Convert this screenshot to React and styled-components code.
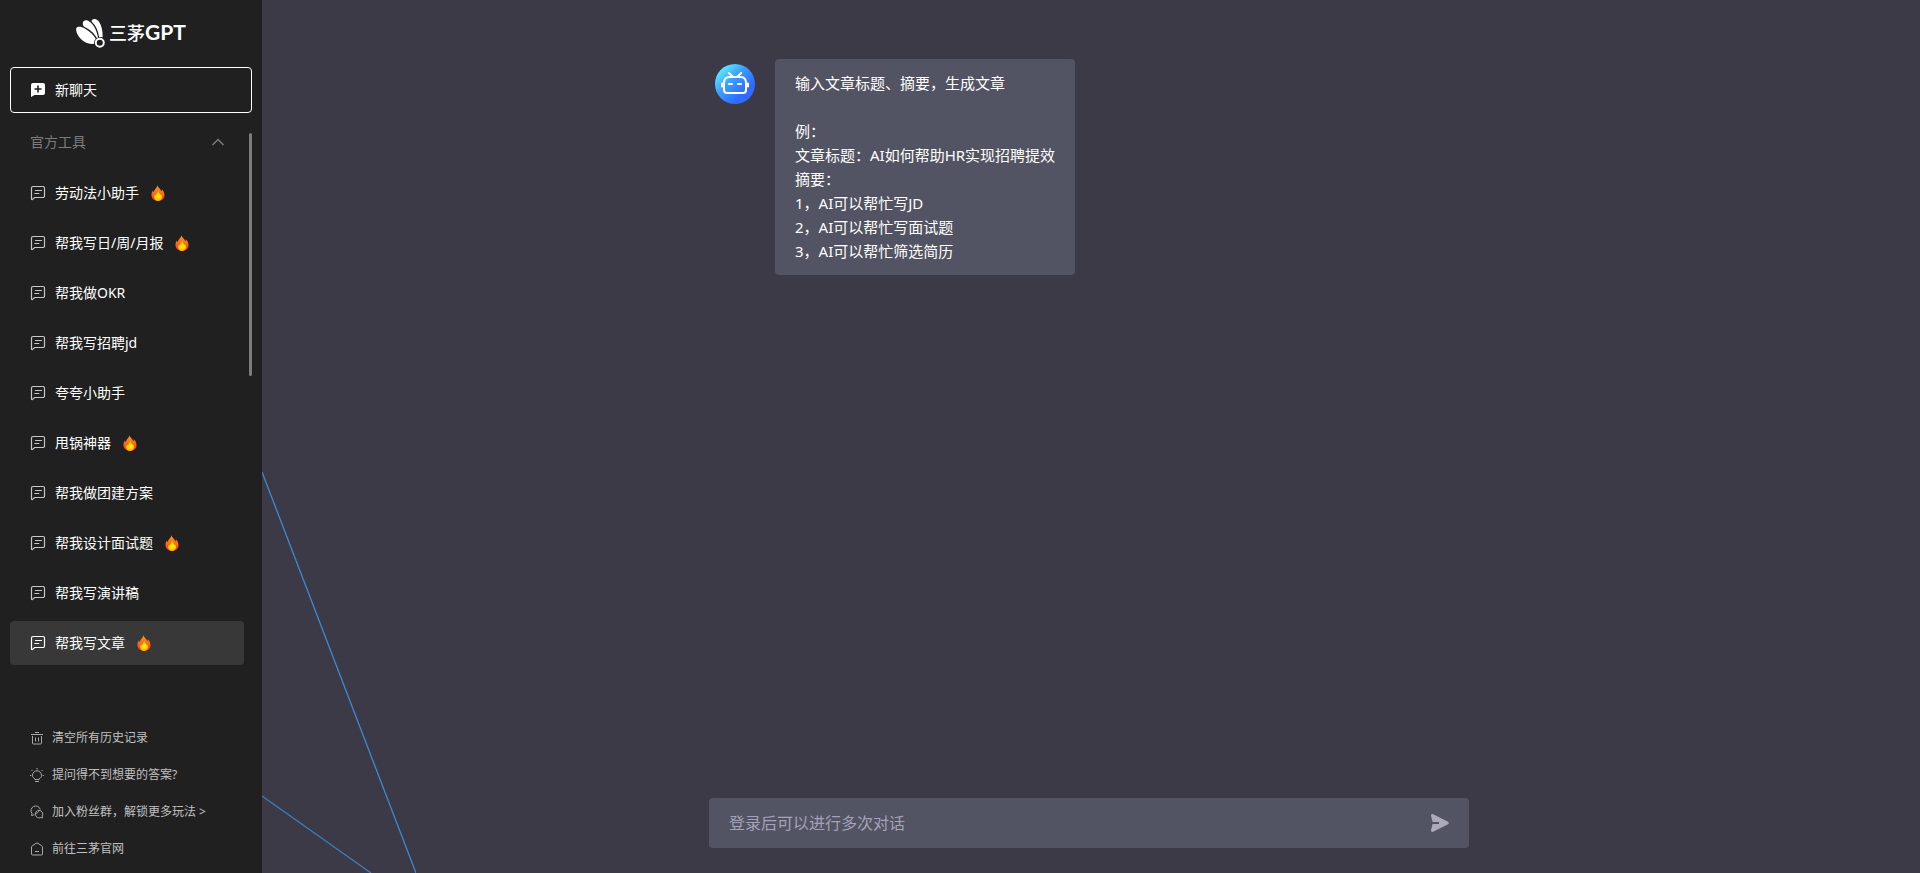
import React, { useState } from 'react';
import styled, { ThemeProvider, createGlobalStyle } from 'styled-components';

const theme = {
  sidebar: '#202020',
  main: '#3b3a46',
  panel: '#535463',
  active: '#383838',
  muted: '#7c7c7c',
  footer: '#c0c0c0',
  placeholder: '#a2a2b8',
};

const tools = [
  { name: '劳动法小助手', hot: true },
  { name: '帮我写日/周/月报', hot: true },
  { name: '帮我做OKR' },
  { name: '帮我写招聘jd' },
  { name: '夸夸小助手' },
  { name: '甩锅神器', hot: true },
  { name: '帮我做团建方案' },
  { name: '帮我设计面试题', hot: true },
  { name: '帮我写演讲稿' },
  { name: '帮我写文章', hot: true },
];

const intro = `输入文章标题、摘要，生成文章

例：
文章标题：AI如何帮助HR实现招聘提效
摘要：
1，AI可以帮忙写JD
2，AI可以帮忙写面试题
3，AI可以帮忙筛选简历`;

const GlobalStyle = createGlobalStyle`
  * {
    box-sizing: border-box;
  }
  body {
    margin: 0;
    font-family: 'Noto Sans', 'Noto Sans CJK SC', sans-serif;
    font-size: 14px;
    color: #fff;
  }
  button, input {
    font: inherit;
    color: inherit;
    border: 0;
    padding: 0;
    background: none;
  }
  button {
    cursor: pointer;
  }
  svg {
    display: block;
    flex: none;
  }
`;

const AppWrapper = styled.div`
  display: grid;
  grid-template-columns: 262px 1fr;
  height: 100vh;
`;

const Sidebar = styled.aside`
  display: flex;
  flex-direction: column;
  min-height: 0;
  padding: 0 10px 6px;
  background: ${props => props.theme.sidebar};
`;

const Logo = styled.a`
  display: flex;
  align-items: center;
  justify-content: center;
  gap: 4px;
  height: 67px;
  color: #fff;
  text-decoration: none;
`;

const LogoText = styled.span`
  padding-bottom: 4px;
  font-family: Lato, 'Noto Sans CJK SC', sans-serif;
  font-size: 21px;
  font-weight: 700;
  line-height: 28px;
`;

const LogoChinese = styled.span`
  font-family: 'Noto Sans CJK SC', sans-serif;
  font-size: 18px;
  font-weight: 500;
`;

const NewChat = styled.button`
  display: flex;
  flex: none;
  align-items: center;
  gap: 9px;
  height: 46px;
  padding: 0 19px;
  border: 1px solid #fff;
  border-radius: 4px;
`;

const ToolArea = styled.section`
  position: relative;
  flex: 1;
  min-height: 0;
  margin-top: 10px;
`;

const ToolScroll = styled.div`
  height: 100%;
  padding-right: 8px;
  overflow-y: auto;
  scrollbar-width: none;
`;

const ScrollThumb = styled.div`
  position: absolute;
  top: 10px;
  right: 0;
  width: 3px;
  height: 243px;
  border-radius: 2px;
  background: ${props => props.theme.muted};
`;

const GroupTitle = styled.button`
  display: flex;
  align-items: center;
  justify-content: space-between;
  width: 100%;
  height: 38px;
  padding: 0 20px;
  color: ${props => props.theme.muted};
`;

const ToolList = styled.ul`
  display: grid;
  gap: 6px;
  margin: 0;
  padding: 10px 0 0;
  list-style: none;
`;

const ToolItem = styled.button`
  display: flex;
  align-items: center;
  gap: 9px;
  width: 100%;
  height: 44px;
  padding: 0 20px;
  border-radius: 4px;
  background: ${props => (props.$active ? props.theme.active : 'transparent')};

  > svg:first-child {
    opacity: ${props => (props.$active ? 1 : 0.75)};
  }
`;

const Label = styled.span`
  padding-bottom: 2px;
`;

const ToolName = styled(Label)`
  margin-right: 2px;
`;

const SidebarFooter = styled.footer`
  display: grid;
  font-size: 12px;
`;

const FooterLink = styled.a`
  display: flex;
  align-items: center;
  gap: 8px;
  height: 37px;
  padding: 0 20px;
  color: ${props => props.theme.footer};
  text-decoration: none;
`;

const Main = styled.main`
  position: relative;
  display: flex;
  flex-direction: column;
  min-width: 0;
  padding: 59px 4px 25px 0;
  background: ${props => props.theme.main};
`;

const Lines = styled.svg`
  position: absolute;
  left: 0;
  bottom: 0;
`;

const Conversation = styled.div`
  flex: 1;
  min-height: 0;
  width: 100%;
  max-width: 760px;
  margin: 0 auto;
  padding: 0 6px;
  overflow-y: auto;
`;

const Message = styled.article`
  display: flex;
  align-items: flex-start;
  gap: 20px;
`;

const Avatar = styled.div`
  padding-top: 5px;
`;

const Bubble = styled.p`
  margin: 0;
  padding: 12px 20px;
  border-radius: 4px;
  background: ${props => props.theme.panel};
  font-size: 15px;
  line-height: 24px;
  white-space: pre-wrap;
`;

const Composer = styled.form`
  position: relative;
  display: flex;
  align-items: center;
  width: 100%;
  max-width: 760px;
  height: 50px;
  margin: 0 auto;
  padding: 0 20px;
  border-radius: 4px;
  background: ${props => props.theme.panel};
`;

const MessageInput = styled.input`
  flex: 1;
  min-width: 0;
  height: 100%;
  outline: none;
  font-size: 16px;

  &::placeholder {
    color: ${props => props.theme.placeholder};
    opacity: 1;
  }
`;

const SendButton = styled.button`
  color: #aaaabc;
`;

const LogoMark = () => (
  <svg width="29" height="29" viewBox="0 0 29 29" fill="#fff" aria-hidden="true">
    <path d="M.2 9.800C.6 7.200 4.800 7.200 8.800 9.400c4.800 2.600 8.900 6.400 11 10.600-1.300 1-1.900 2.500-1.600 4.700C13.500 25.800 8 23.500 4.400 19.500 1.500 16.200-.2 12.600.2 9.800z" />
    <path d="M6.800 3.900c.5-2.900 4-3.500 7.200-1 4.200 3.200 7.200 9.800 8 15.700-.4.100-.8.300-1.200.5-2.400-4.600-7-8.700-12.200-11C7.200 7.100 6.500 5.500 6.800 3.900z" />
    <path d="M15.800 1.200C17.200-.8 21-.5 23.300 3.200c2.600 4.200 3.700 10.200 3.200 15.400-1.100-.5-2.200-.6-3.400-.4C22.400 12.200 20 6.600 16 3c-.4-.6-.5-1.200-.2-1.800z" />
    <circle cx="23.800" cy="23.800" r="4" fill="none" stroke="#fff" strokeWidth="1.900" />
  </svg>
);

const NewChatIcon = () => (
  <svg width="16" height="16" viewBox="0 0 16 16" aria-hidden="true">
    <path d="M3 1h10a2 2 0 0 1 2 2v8a2 2 0 0 1-2 2H4.500L1 15V3a2 2 0 0 1 2-2z" fill="#fff" />
    <path d="M8 3.500v7M4.500 7h7" stroke="#202020" strokeWidth="1.600" />
  </svg>
);

const ChatIcon = () => (
  <svg width="16" height="16" viewBox="0 0 16 16" fill="none" stroke="#fff" strokeWidth="1.200" strokeLinejoin="round" strokeLinecap="round" aria-hidden="true">
    <path d="M3 1.500h10A1.500 1.500 0 0 1 14.500 3v8a1.500 1.500 0 0 1-1.500 1.500H4.800l-2.300 1.900c-.5.300-1 .1-1-.5V3A1.500 1.500 0 0 1 3 1.500zM5.500 5.500h6M4.800 8.500h4" />
  </svg>
);

const FireIcon = () => (
  <svg width="16" height="16" viewBox="0 0 16 16" aria-hidden="true">
    <defs>
      <linearGradient id="flame" x1="0" y1="0" x2="0" y2="1">
        <stop offset="0" stopColor="#ff9a16" />
        <stop offset=".55" stopColor="#fb6a16" />
        <stop offset="1" stopColor="#f8283e" />
      </linearGradient>
      <linearGradient id="flameCore" x1="0" y1="0" x2="0" y2="1">
        <stop offset="0" stopColor="#ffd500" />
        <stop offset=".6" stopColor="#ffe600" />
        <stop offset="1" stopColor="#ffb000" />
      </linearGradient>
    </defs>
    <path fill="url(#flame)" d="M7.600 0c-.2 2.400 3.200 3.700 3.600 6.300.5-.5.700-1.300.6-2.100 1.600 1.300 2.700 3.500 2.700 6 0 3.400-2.700 5.800-6.300 5.800S1.500 13.500 1.500 10.200c0-2 .5-3.300 1.400-4.600.1.800.4 1.300.9 1.600C4 4.500 7 3.200 7.600 0z" />
    <path fill="url(#flameCore)" d="M8.400 5.800c0 1.800 1.500 2.500 1.700 4.300.4-.3.600-.7.600-1.200.9.900 1.200 2 1.200 3.200 0 2.200-1.500 3.900-3.700 3.900s-3.900-1.500-3.900-3.800c0-1.200.3-2 1-2.800.1.600.3.900.7 1.100.1-2.100 2.200-2.600 2.400-4.700z" />
  </svg>
);

const ChevronUp = () => (
  <svg width="12" height="12" viewBox="0 0 12 12" fill="none" stroke="currentColor" strokeWidth="1.500" aria-hidden="true">
    <path d="M.5 9 6 3.500 11.500 9" />
  </svg>
);

const FooterIcon = ({ children }) => (
  <svg width="14" height="14" viewBox="0 0 14 14" fill="none" stroke="#a8a8a8" strokeWidth="1" aria-hidden="true">
    {children}
  </svg>
);

const Robot = () => (
  <svg width="40" height="40" viewBox="0 0 40 40" role="img" aria-label="三茅GPT">
    <defs>
      <linearGradient id="robotBg" x1="0.100" y1="0.150" x2="0.700" y2="0.750">
        <stop offset="0" stopColor="#60eaff" />
        <stop offset=".5" stopColor="#389cff" />
        <stop offset="1" stopColor="#316aff" />
      </linearGradient>
    </defs>
    <circle cx="20" cy="20" r="20" fill="url(#robotBg)" />
    <g fill="none" stroke="#fff" strokeWidth="2" strokeLinecap="round">
      <path d="M13.800 9l4 3.800M26.200 9l-4 3.800" />
      <path d="M14.500 13h11c3.500 0 5.500 2.500 5.500 6v7a3 3 0 0 1-3 3H12a3 3 0 0 1-3-3v-7c0-3.500 2-6 5.500-6z" />
      <path d="M7 19.500v3M33 19.500v3M14 20h3M23 20h3" />
    </g>
  </svg>
);

const SendIcon = () => (
  <svg width="20" height="20" viewBox="0 0 20 20" fill="currentColor" aria-hidden="true">
    <path d="M4.200 1.200 19 8.700c1 .5 1 2 0 2.500L4.200 18.800c-1.200.5-2.300-.4-2.200-1.600L3.600 11H10V9H3.600L2 2.800C1.900 1.600 3 .7 4.200 1.200z" />
  </svg>
);

const footerLinks = [
  {
    text: '清空所有历史记录',
    icon: <path d="M1 3.500h12M5 1.500h4M2.500 5v7a1 1 0 0 0 1 1h7a1 1 0 0 0 1-1V5M5.500 6.500v4M8.500 6.500v4" />,
  },
  {
    text: '提问得不到想要的答案?',
    icon: <path d="M5 11.500V11C3.500 10.200 2.500 9 2.500 7.300a4.500 4.500 0 0 1 9 0c0 1.700-1 2.900-2.500 3.700v.5zM5 13.500h4M7 0v1.500M0 7.500h1.300M12.700 7.500H14M1.500 2l1 1M12.500 2l-1 1" />,
  },
  {
    text: '加入粉丝群，解锁更多玩法 >',
    icon: <path d="M4.200 9.800 1.500 10.500l.5-2A4.700 4.700 0 1 1 10.300 4.500M9 5.300a3.800 3.800 0 0 1 3.200 5.800l.5 1.700-1.900-.3A3.800 3.800 0 1 1 9 5.300zM5.200 8.500c2 0 3.500-1.200 3.800-3.200" />,
  },
  {
    text: '前往三茅官网',
    icon: <path d="M6 1.300 1.800 4.200a1 1 0 0 0-.3.800v7a1 1 0 0 0 1 1h9a1 1 0 0 0 1-1V5a1 1 0 0 0-.3-.8L8 1.300a2 2 0 0 0-2 0zM5 9.500h4" />,
  },
];

export default function App() {
  const [active, setActive] = useState('帮我写文章');
  const [open, setOpen] = useState(true);

  return (
    <ThemeProvider theme={theme}>
      <GlobalStyle />
      <AppWrapper>
        <Sidebar>
          <Logo href="#">
            <LogoMark />
            <LogoText>
              <LogoChinese>三茅</LogoChinese>GPT
            </LogoText>
          </Logo>
          <NewChat type="button">
            <NewChatIcon />
            <Label>新聊天</Label>
          </NewChat>
          <ToolArea>
            <ToolScroll>
              <GroupTitle type="button" aria-expanded={open} onClick={() => setOpen(!open)}>
                <Label>官方工具</Label>
                <ChevronUp />
              </GroupTitle>
              {open && (
                <ToolList>
                  {tools.map(tool => (
                    <li key={tool.name}>
                      <ToolItem type="button" $active={tool.name === active} onClick={() => setActive(tool.name)}>
                        <ChatIcon />
                        <ToolName>{tool.name}</ToolName>
                        {tool.hot && <FireIcon />}
                      </ToolItem>
                    </li>
                  ))}
                </ToolList>
              )}
            </ToolScroll>
            <ScrollThumb />
          </ToolArea>
          <SidebarFooter>
            {footerLinks.map(link => (
              <FooterLink href="#" key={link.text}>
                <FooterIcon>{link.icon}</FooterIcon>
                <Label>{link.text}</Label>
              </FooterLink>
            ))}
          </SidebarFooter>
        </Sidebar>
        <Main>
          <Lines width="154" height="401" viewBox="0 0 154 401" stroke="#3b8bd4" strokeWidth="1.300" aria-hidden="true">
            <path d="M0 0 154 401" />
            <path d="M0 324 109 401" opacity=".85" />
          </Lines>
          <Conversation>
            <Message>
              <Avatar>
                <Robot />
              </Avatar>
              <Bubble>{intro}</Bubble>
            </Message>
          </Conversation>
          <Composer onSubmit={e => e.preventDefault()}>
            <MessageInput type="text" aria-label="消息" placeholder="登录后可以进行多次对话" />
            <SendButton type="submit" aria-label="发送">
              <SendIcon />
            </SendButton>
          </Composer>
        </Main>
      </AppWrapper>
    </ThemeProvider>
  );
}
